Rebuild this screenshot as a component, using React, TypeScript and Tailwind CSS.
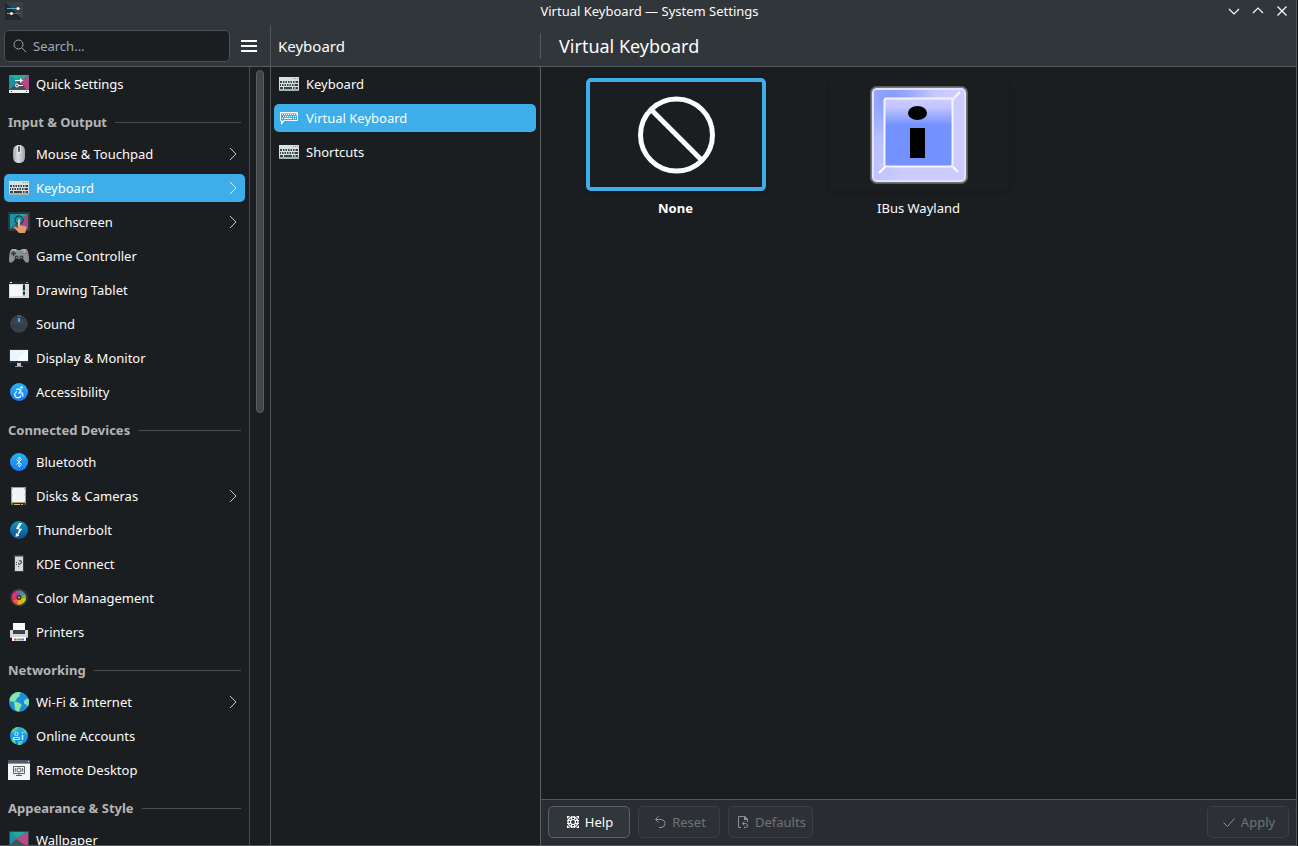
import clsx from 'clsx';
import * as React from 'react';

type Row = { label: string; icon: React.ReactNode; arrow?: boolean; active?: boolean };

function Icon({ children }: { children: React.ReactNode }) {
  return (
    <svg viewBox="0 0 22 22" className="h-[22px] w-[22px] shrink-0" fill="none" aria-hidden="true">
      {children}
    </svg>
  );
}

function QuickIcon() {
  return (
    <Icon>
      <path d="M1 2h20v16H1z" fill="#1a93a5" />
      <path d="M1 2h17l-7 7z" fill="#1fab9f" />
      <path d="M21 2v15h-4L9 9z" fill="#b3488c" />
      <path d="M21 2 9 10l3-8z" fill="#2aa98c" />
      <path d="M1 17 11 8l8 9z" fill="#455057" />
      <path d="M1 17h20v3H1z" fill="#eff0f1" />
      <path d="M3 18h1v1H3zM18 18h1v1h-1z" fill="#4d4d4d" />
      <path d="M7 7.500h8M7 12.500h8" stroke="#fff" />
      <path d="m12 5 3 2.500-3 2.500z" fill="#fff" />
      <circle cx="9" cy="12.500" r="1.500" fill="#6a5c72" stroke="#fff" />
    </Icon>
  );
}

function MouseIcon() {
  return (
    <Icon>
      <defs>
        <linearGradient id="mouse" x1="0" y1="0" x2="1" y2="0">
          <stop stopColor="#9fa4a9" />
          <stop offset="0.400" stopColor="#dadde0" />
          <stop offset="1" stopColor="#a0a5aa" />
        </linearGradient>
      </defs>
      <path d="M5 9c0-5 2-7 6-7s6 2 6 7v4c0 5-2 7-6 7s-6-2-6-7z" fill="url(#mouse)" />
      <path d="M9 2.500h4V9c0 2-4 2-4 0z" fill="#e6e8ea" />
      <rect x="10" y="3" width="2" height="6" rx="1" fill="#4b5866" />
    </Icon>
  );
}

function KeyboardIcon() {
  return (
    <Icon>
      <path d="M1 4h20v14H1z" fill="#dcdfe0" />
      <path d="M1 16h20v2H1z" fill="#a7b1b5" />
      <path d="M15 5.500h1M17 5.500h1M19 5.500h1" stroke="#2ecc71" />
      <path d="M2 9h2M5 9h1.500M7.500 9H9M10 9h1.500M12.500 9H14M15 9h1.500M17.500 9H20" stroke="#31464b" strokeWidth="2" />
      <path d="M2 12h1M4 12h1.500M6.500 12H8M9 12h1.500M11.500 12H13M14 12h1.500M16.500 12H20" stroke="#31464b" strokeWidth="2" />
      <path d="M2 15h3M6 15h8M15 15h1.500M17.500 15H20" stroke="#31464b" strokeWidth="2" />
    </Icon>
  );
}

function VirtualKeyboardIcon() {
  return (
    <Icon>
      <path d="M2.500 5.500h17v8H5.500l-2 3v-3h-1z" stroke="#fcfcfc" />
      <path d="M2 5h18v2H2z" fill="#fcfcfc" opacity=".4" />
      <path d="M4 7.500h15M5 9.500h13" stroke="#fcfcfc" strokeDasharray="1 1" />
      <path d="M4 11.500h1M6 11.500h8M15 11.500h1M17 11.500h1" stroke="#fcfcfc" />
      <path d="M3 14h3l-2.500 4z" fill="#fcfcfc" />
    </Icon>
  );
}

function TouchIcon() {
  return (
    <Icon>
      <rect y="1" width="22" height="19" rx="1" fill="#31363b" />
      <path d="M2 3h18v15H2z" fill="#1d92ab" />
      <path d="M10 3h8l-4 5z" fill="#23ad90" />
      <path d="M20 3v15h-5L13 8z" fill="#a54689" />
      <path d="m2 18 9-8 6 8z" fill="#4c5965" />
      <circle cx="11" cy="9" r="4" stroke="#17495c" strokeWidth="1.500" />
      <path d="M10 9c0-1.500 2-1.500 2 0v5l6 1.500c1 .500.500 3-1 6.500h-6l-5-5.500c-.500-1 1-1.500 2-.500l2 1z" fill="#e49b67" />
      <path d="M11 8.500v6" stroke="#fde2c8" />
    </Icon>
  );
}

function GamepadIcon() {
  return (
    <Icon>
      <path d="M4 4h4l1 1h4l1-1h4c2 1 3 5 3 11 0 4-3 3-4.500 1L15 14H7l-1.500 2C4 18 1 19 1 15 1 9 2 5 4 4z" fill="#8b9097" />
      <path d="M4 4h4l1 2H3zM14 4h4l1 2h-6z" fill="#a6aaae" />
      <path d="M5.500 6v5M3 8.500h5" stroke="#33383d" strokeWidth="1.500" />
      <circle cx="8.500" cy="12.500" r="2" fill="#33383d" />
      <circle cx="13.500" cy="12.500" r="2" fill="#33383d" />
      <circle cx="8.500" cy="12.500" r=".8" fill="#858a90" />
      <circle cx="13.500" cy="12.500" r=".8" fill="#858a90" />
      <circle cx="16.500" cy="6.500" r="1.100" fill="#e9b43a" />
      <circle cx="14.500" cy="8.500" r="1.100" fill="#4e91d0" />
      <circle cx="18.500" cy="8.500" r="1.100" fill="#d65356" />
      <circle cx="16.500" cy="10.500" r="1.100" fill="#54b36a" />
    </Icon>
  );
}

function TabletIcon() {
  return (
    <Icon>
      <path d="M1 2h20v3H1z" fill="#22272b" />
      <path d="M1 5h20v14H1z" fill="#d9dbdc" />
      <path d="M2 6h12v11H2z" fill="#f7f7f7" />
      <path d="M2 3.500h2" stroke="#eee" />
      <path d="M18 3.500h2" stroke="#3daee9" />
      <path d="M16 5.500v10" stroke="#232629" strokeWidth="2" />
      <path d="M16 11v2" stroke="#3daee9" strokeWidth="2" />
      <path d="m15 15 1 2 1-2z" fill="#555" />
    </Icon>
  );
}

function SoundIcon() {
  return (
    <Icon>
      <circle cx="11" cy="11" r="9" fill="#2f373f" />
      <circle cx="11" cy="10.500" r="7.500" stroke="#4c5660" strokeDasharray="2 1" />
      <circle cx="11" cy="11" r="6.500" fill="#3b4650" />
      <path d="M4.500 11a6.500 6.500 0 0 0 13 0" fill="#343e47" />
      <path d="M11 5v4" stroke="#3daee9" strokeWidth="2" />
      <path d="M9 3h4" stroke="#2382bd" />
    </Icon>
  );
}

function MonitorIcon() {
  return (
    <Icon>
      <path d="M1 2h20v14H1z" fill="#2d3236" />
      <path d="M2 3h18v11H2z" fill="#e9f6fd" />
      <path d="M20 3v11H7z" fill="#f7fcff" />
      <path d="M9 16h4v3H9z" fill="#bfc3c6" />
      <path d="M7 19.500h8" stroke="#8b9195" />
    </Icon>
  );
}

function BlueDisc({ id, from, to, children }: { id: string; from: string; to: string; children: React.ReactNode }) {
  return (
    <Icon>
      <defs>
        <linearGradient id={id} x1="0" y1="0" x2="0" y2="1">
          <stop stopColor={from} />
          <stop offset="1" stopColor={to} />
        </linearGradient>
      </defs>
      <circle cx="11" cy="11" r="9" fill={`url(#${id})`} />
      {children}
    </Icon>
  );
}

function AccessIcon() {
  return (
    <BlueDisc id="access" from="#23b5f8" to="#1b78ee">
      <circle cx="13.500" cy="6.500" r="1.200" fill="#fff" />
      <path d="M8 8.500 11 8l2 1.500-2 2.500h3.500l.500 3.500" stroke="#fff" strokeWidth="1.200" />
      <path d="M9 10.500a3.200 3.200 0 1 0 4 4" stroke="#fff" strokeWidth="1.200" />
    </BlueDisc>
  );
}

function BluetoothIcon() {
  return (
    <BlueDisc id="bt" from="#23b5f8" to="#1b78ee">
      <path d="m8.500 8.500 5 5L11 16V6l2.500 2.500-5 5" stroke="#d8f1ff" />
    </BlueDisc>
  );
}

function DiskIcon() {
  return (
    <Icon>
      <path d="M3 2h15v16H3z" fill="#9a9fa2" />
      <path d="M5 3h11l1 2v4l-.500 1 .500 1v5l-1 1H5l-1-1v-5l.500-1L4 9V5z" fill="#f3f4f4" />
      <path d="M3 18h15v2H3z" fill="#656c70" />
      <path d="M5 18h12v2H5z" fill="#2a2e32" />
      <path d="M6 19.500h6M13 19.500h2" stroke="#f2b64a" />
    </Icon>
  );
}

function ThunderIcon() {
  return (
    <BlueDisc id="thunder" from="#1596c4" to="#0d4d92">
      <path d="m11 4-3 6 3 .500-1.500 4.500L8 14l-.500 4 4-1.500-1.200-.700L14 10l-3-.800L14 4z" fill="#fff" />
    </BlueDisc>
  );
}

function KdeConnectIcon() {
  return (
    <Icon>
      <path d="M6 2h10v17H6z" fill="#373c40" />
      <path d="M7 3.500h8V18H7z" fill="#d5d8da" />
      <path d="M11 8c1.500-1 3 .500 2 2-.500 1-1.500.500-2 2" stroke="#4b5054" strokeWidth="1.300" />
      <path d="M8 9h1v1H8zM8 11h1v1H8zM10 13h1v1h-1zM10 10h1v1h-1z" fill="#4b5054" />
    </Icon>
  );
}

function ColorIcon() {
  return (
    <Icon>
      <circle cx="11" cy="10.500" r="9" fill="#363b40" />
      <path d="M11 10.500 7 4.500a7 7 0 0 1 5-1z" fill="#8e5bb5" />
      <path d="m11 10.500 1-7a7 7 0 0 1 5 3.500z" fill="#4f8f9e" />
      <path d="m11 10.500 6-3.500a7 7 0 0 1 1 4z" fill="#76bb46" />
      <path d="m11 10.500 7 .500a7 7 0 0 1-3 5.500z" fill="#c6cf18" />
      <path d="m11 10.500 4 6a7 7 0 0 1-6 1z" fill="#f4a81d" />
      <path d="m11 10.500-2 7a7 7 0 0 1-4.500-4z" fill="#f4652c" />
      <path d="M11 10.500 4.500 13.500A7 7 0 0 1 7 4.500z" fill="#e52e75" />
      <circle cx="11" cy="10.500" r="2.500" fill="#31363b" />
      <circle cx="11" cy="10.500" r="1.100" fill="#aaa" />
    </Icon>
  );
}

function PrinterIcon() {
  return (
    <Icon>
      <path d="M2 9h18v7H2z" fill="#d5d8da" />
      <path d="M5 2h12v9H5z" fill="#fafafa" />
      <path d="M5 9h12v4H5z" fill="#3a424a" />
      <path d="M2 16h18v1H2z" fill="#8c959b" />
      <path d="M4 16h14v4H4z" fill="#fff" />
      <path d="M6 18.500h2" stroke="#e74c3c" strokeWidth="2" />
      <path d="M8 18.500h2" stroke="#f39c1f" strokeWidth="2" />
      <path d="M10 18.500h2" stroke="#2ecc71" strokeWidth="2" />
      <path d="M12 18.500h2" stroke="#3daee9" strokeWidth="2" />
      <path d="M14 18.500h2" stroke="#9b59b6" strokeWidth="2" />
    </Icon>
  );
}

function GlobeIcon() {
  return (
    <Icon>
      <circle cx="11" cy="11" r="10" fill="#1e8cdf" />
      <path d="M1.500 8C3 4 6 1 11 1l2 .500-2 2.500 1 1-3 2-1 3-3 1-1-1-2 1z" fill="#83e5b2" />
      <path d="M6 11h3l4 2c1 1 0 3-1 4l-1 3.500c-2 0-4-1-4-3z" fill="#8aea98" />
      <path d="m16 10 2-2 2.500-.500c1 3 .500 6-.500 8l-2-2-2-1z" fill="#7de6b4" />
    </Icon>
  );
}

function AccountsIcon() {
  return (
    <BlueDisc id="accounts" from="#22b2f0" to="#1c7fe0">
      <path d="M3 7c1-3 4-5 8-5L8 6 4 8zM14 3l4 3 1.500 3-3-1zM3 13l4 2 1 4c-3-1-5-3-5-6zM10 16h5l-2 4h-3z" fill="#55d492" />
      <circle cx="8.500" cy="9" r="1.700" stroke="#c7efff" />
      <path d="M5.500 14.500v-2h6v2z" stroke="#c7efff" />
      <path d="M14.500 7v1.500M14.500 10v5" stroke="#c7efff" strokeWidth="1.500" />
    </BlueDisc>
  );
}

function RemoteIcon() {
  return (
    <Icon>
      <path d="M0 1h22v3H0z" fill="#4b5a66" />
      <path d="M0 4h22v17H0z" fill="#f4f5f5" />
      <path d="M0 4.500h22" stroke="#3daee9" />
      <path d="M20 2h1v1h-1z" fill="#fff" />
      <path d="M5.500 7.500h11v7h-11zM8 16.500h6M11 14v3" stroke="#5b6165" />
      <circle cx="11" cy="11" r="2" stroke="#5b6165" />
      <path d="m8 9-1 2 1 2M14 9l1 2-1 2" stroke="#5b6165" />
    </Icon>
  );
}

function WallpaperIcon() {
  return (
    <Icon>
      <path d="M1 2h20v18H1z" fill="#3a444c" />
      <path d="M2 3h18v14H2z" fill="#1a93a5" />
      <path d="M4 3h14l-9 6z" fill="#22aa9a" />
      <path d="M20 3v13h-4L8 9z" fill="#bb4a84" />
      <path d="m2 16 6-6 9 6v3H2z" fill="#455057" />
    </Icon>
  );
}

const sections: { title?: string; rows: Row[] }[] = [
  { rows: [{ label: 'Quick Settings', icon: <QuickIcon /> }] },
  {
    title: 'Input & Output',
    rows: [
      { label: 'Mouse & Touchpad', icon: <MouseIcon />, arrow: true },
      { label: 'Keyboard', icon: <KeyboardIcon />, arrow: true, active: true },
      { label: 'Touchscreen', icon: <TouchIcon />, arrow: true },
      { label: 'Game Controller', icon: <GamepadIcon /> },
      { label: 'Drawing Tablet', icon: <TabletIcon /> },
      { label: 'Sound', icon: <SoundIcon /> },
      { label: 'Display & Monitor', icon: <MonitorIcon /> },
      { label: 'Accessibility', icon: <AccessIcon /> },
    ],
  },
  {
    title: 'Connected Devices',
    rows: [
      { label: 'Bluetooth', icon: <BluetoothIcon /> },
      { label: 'Disks & Cameras', icon: <DiskIcon />, arrow: true },
      { label: 'Thunderbolt', icon: <ThunderIcon /> },
      { label: 'KDE Connect', icon: <KdeConnectIcon /> },
      { label: 'Color Management', icon: <ColorIcon /> },
      { label: 'Printers', icon: <PrinterIcon /> },
    ],
  },
  {
    title: 'Networking',
    rows: [
      { label: 'Wi-Fi & Internet', icon: <GlobeIcon />, arrow: true },
      { label: 'Online Accounts', icon: <AccountsIcon /> },
      { label: 'Remote Desktop', icon: <RemoteIcon /> },
    ],
  },
  { title: 'Appearance & Style', rows: [{ label: 'Wallpaper', icon: <WallpaperIcon /> }] },
];

const pages: Row[] = [
  { label: 'Keyboard', icon: <KeyboardIcon /> },
  { label: 'Virtual Keyboard', icon: <VirtualKeyboardIcon />, active: true },
  { label: 'Shortcuts', icon: <KeyboardIcon /> },
];

function NavRow({ label, icon, arrow, active }: Row) {
  return (
    <li className="py-[3px]">
      <a
        href="#"
        aria-current={active ? 'page' : undefined}
        className={clsx('flex h-7 items-center gap-[6px] rounded-[5px] px-1', active && 'bg-[#3daee9]')}
      >
        {icon}
        <span className="flex-1 whitespace-nowrap">{label}</span>
        {arrow && (
          <svg viewBox="0 0 16 16" className="h-4 w-4" fill="none" stroke={active ? '#d5eefb' : '#c5c8ca'} aria-hidden="true">
            <path d="m5 2 6 6-6 6" />
          </svg>
        )}
      </a>
    </li>
  );
}

function TitleBar() {
  return (
    <header className="grid h-[25px] shrink-0 grid-cols-3 items-center pr-[2px] pb-[3px] pl-[5px]">
      <svg viewBox="0 0 18 18" className="h-[18px] w-[18px]" aria-hidden="true">
        <rect width="18" height="18" fill="#24282b" />
        <path d="M0 0h18v18z" fill="#3a3f43" />
        <path d="M2 6.500h14M2 11.500h14" stroke="#5b6064" />
        <path d="M2 6.500h11M2 11.500h4" stroke="#3daee9" />
        <circle cx="13" cy="6.500" r="1.500" fill="#fff" />
        <circle cx="6.500" cy="11.500" r="1.500" fill="#fff" />
      </svg>
      <span className="text-center whitespace-nowrap">Virtual Keyboard — System Settings</span>
      <div className="flex justify-end">
        <button type="button" aria-label="Minimize" className="flex h-5 w-6 items-center justify-center">
          <svg viewBox="0 0 16 16" className="h-4 w-4" fill="none" stroke="#fcfcfc" strokeWidth="1.200">
            <path d="m3 6 5 5 5-5" />
          </svg>
        </button>
        <button type="button" aria-label="Maximize" className="flex h-5 w-6 items-center justify-center">
          <svg viewBox="0 0 16 16" className="h-4 w-4" fill="none" stroke="#fcfcfc" strokeWidth="1.200">
            <path d="m3 10 5-5 5 5" />
          </svg>
        </button>
        <button type="button" aria-label="Close" className="flex h-5 w-6 items-center justify-center">
          <svg viewBox="0 0 16 16" className="h-4 w-4" fill="none" stroke="#fcfcfc" strokeWidth="1.300">
            <path d="m3.500 3.500 9 9M12.500 3.500l-9 9" />
          </svg>
        </button>
      </div>
    </header>
  );
}

function Sidebar() {
  return (
    <div className="flex w-[271px] shrink-0 flex-col border-r border-[#53575b]">
      <div className="flex h-[42px] shrink-0 items-center border-b border-[#565b62] bg-[#31363b] pr-[2px] pl-1">
        <label className="flex h-8 flex-1 items-center gap-[6px] rounded-[5px] border border-[#4b5054] bg-[#1b1e20] pl-2">
          <svg viewBox="0 0 14 14" className="h-[14px] w-[14px] shrink-0" fill="none" stroke="#a1a5a8" aria-hidden="true">
            <circle cx="5.500" cy="5.500" r="4.500" />
            <path d="m9 9 4 4" />
          </svg>
          <input
            type="text"
            placeholder="Search..."
            aria-label="Search"
            className="w-full min-w-0 bg-transparent outline-none placeholder:text-[#a1a9b1]"
          />
        </label>
        <button type="button" aria-label="Show menu" className="flex h-8 w-[38px] items-center justify-center">
          <svg viewBox="0 0 16 12" className="h-3 w-4" fill="#fcfcfc">
            <path d="M0 0h16v2H0zM0 5h16v2H0zM0 10h16v2H0z" />
          </svg>
        </button>
      </div>
      <div className="flex min-h-0 flex-1">
        <nav className="min-w-0 flex-1 overflow-hidden border-r border-[#494d50] px-1">
          {sections.map((section) => (
            <section key={section.rows[0].label}>
              {section.title && (
                <h2 className="flex h-9 items-center gap-2 px-1 pt-[6px] font-bold whitespace-nowrap text-[#b3b4b5]">
                  {section.title}
                  <span className="h-px flex-1 bg-[#494d50]" />
                </h2>
              )}
              <ul>
                {section.rows.map((row) => (
                  <NavRow key={row.label} {...row} />
                ))}
              </ul>
            </section>
          ))}
        </nav>
        <div className="w-5 px-[6px] py-[3px]">
          <div className="h-4/9 w-2 rounded-full border border-[#5b5e60] bg-[#414547]" />
        </div>
      </div>
    </div>
  );
}

function PageList() {
  return (
    <div className="flex w-[270px] shrink-0 flex-col">
      <div className="flex h-[42px] shrink-0 items-center border-b border-[#565b62] bg-[#31363b] pl-[7px]">
        <h2 className="h-[26px] flex-1 border-r border-[#565b62] text-[15px] leading-[26px]">Keyboard</h2>
      </div>
      <ul className="flex-1 border-r border-[#5b5f63] pr-1 pl-[3px]">
        {pages.map((page) => (
          <NavRow key={page.label} {...page} />
        ))}
      </ul>
    </div>
  );
}

function NoneIcon() {
  return (
    <svg viewBox="0 0 78 78" className="h-[78px] w-[78px]" fill="none" stroke="#fcfcfc" strokeWidth="5" aria-hidden="true">
      <circle cx="39.500" cy="39" r="36" />
      <path d="m14.500 14 50 50" />
    </svg>
  );
}

function IBusIcon() {
  return (
    <svg viewBox="0 0 98 98" className="h-[98px] w-[98px]" fill="none" aria-hidden="true">
      <defs>
        <linearGradient id="bezel" x1="0" y1="0.200" x2="0.600" y2="0.500">
          <stop stopColor="#7391ff" />
          <stop offset="1" stopColor="#ccccff" />
        </linearGradient>
        <linearGradient id="face" x1="0" y1="0" x2="0" y2="1">
          <stop stopColor="#ccccff" />
          <stop offset="0.120" stopColor="#c3c6ff" />
          <stop offset="0.400" stopColor="#7391ff" />
        </linearGradient>
        <radialGradient id="glow" cx="0.220" cy="0.100" r="0.480">
          <stop stopColor="#7f9aff" />
          <stop offset="1" stopColor="#ccccff" />
        </radialGradient>
      </defs>
      <rect x=".5" y=".5" width="97" height="97" rx="6" fill="#77777c" stroke="#5a5a5a" />
      <rect x="2" y="2" width="94" height="94" rx="5" fill="#e4e3ff" />
      <rect x="4" y="4" width="90" height="90" rx="3" fill="url(#bezel)" />
      <rect x="4" y="4" width="90" height="90" rx="3" fill="url(#glow)" opacity=".7" />
      <path d="m82 14 8-8" stroke="#f0f0f4" strokeWidth="2.500" />
      <path d="m15 81-6 6M83 81l5 5" stroke="#fff" strokeWidth="2" />
      <rect x="14.500" y="12.500" width="68" height="68" rx="2" fill="url(#face)" stroke="#f4f3ff" strokeWidth="2" />
      <ellipse cx="47.500" cy="27" rx="9.500" ry="7" fill="#000" />
      <path d="M40 42h15v30H40z" fill="#000" />
    </svg>
  );
}

function Choice({ label, selected, children }: { label: string; selected?: boolean; children: React.ReactNode }) {
  return (
    <button type="button" aria-pressed={!!selected} className="flex flex-col items-center gap-[7px]">
      <span
        className={clsx(
          'flex h-[113px] w-[180px] items-center justify-center rounded-[5px] border-4 shadow-[0_1px_4px_rgba(0,0,0,0.25)]',
          selected ? 'border-[#3daee9]' : 'border-transparent',
        )}
      >
        {children}
      </span>
      <span className={clsx(selected && 'font-bold')}>{label}</span>
    </button>
  );
}

function FooterButton({ label, disabled, children }: { label: string; disabled?: boolean; children: React.ReactNode }) {
  return (
    <button
      type="button"
      disabled={disabled}
      className={clsx(
        'flex h-8 min-w-[82px] items-center justify-center gap-1 rounded-[5px] border px-[6px]',
        disabled ? 'border-[#3c4044] bg-[#2d3135] text-[#6f7376]' : 'border-[#5c6165] bg-[#31363b]',
      )}
    >
      <svg viewBox="0 0 16 16" className="h-4 w-4" fill="none" stroke={disabled ? '#8e9194' : '#fcfcfc'} aria-hidden="true">
        {children}
      </svg>
      {label}
    </button>
  );
}

function Main() {
  return (
    <main className="flex min-w-0 flex-1 flex-col">
      <div className="flex h-[42px] shrink-0 items-center border-b border-[#565b62] bg-[#31363b] pl-[18px]">
        <h1 className="text-lg">Virtual Keyboard</h1>
      </div>
      <div className="grid flex-1 grid-cols-3 content-start px-[13px] pt-[11px]">
        <Choice label="None" selected>
          <NoneIcon />
        </Choice>
        <Choice label="IBus Wayland">
          <IBusIcon />
        </Choice>
      </div>
      <footer className="flex shrink-0 gap-2 border-t border-[#53575b] bg-[#292c30] px-[7px] pt-[6px] pb-[7px]">
        <FooterButton label="Help">
          <circle cx="8" cy="8" r="5" strokeWidth="1.300" />
          <circle cx="8" cy="8" r="2.500" strokeWidth="1.200" />
          <path d="M6.500 2v4M9.500 2v4M6.500 10v4M9.500 10v4M2 6.500h4M2 9.500h4M10 6.500h4M10 9.500h4" />
          <path d="M2 2h3L2 5zM14 2v3l-3-3zM14 14h-3l3-3zM2 14v-3l3 3z" fill="#fcfcfc" stroke="none" />
        </FooterButton>
        <FooterButton label="Reset" disabled>
          <path d="M6.500 2.500 3.500 5.500l3 3M3.500 5.500H9a4 4 0 0 1 0 8H7" />
        </FooterButton>
        <FooterButton label="Defaults" disabled>
          <path d="M6 13.500H3.500v-11h6l3 3V8M9.500 2.500v3h3" />
          <path d="m9.500 7.500-2 2 2 2M7.500 9.500h3a2 2 0 0 1 0 4H9" />
          <path d="M9 2h1l3 3v1H9z" fill="#8e9194" stroke="none" />
        </FooterButton>
        <div className="flex flex-1 justify-end">
          <FooterButton label="Apply" disabled>
            <path d="m2.500 8.500 4 4 7-8" />
          </FooterButton>
        </div>
      </footer>
    </main>
  );
}

export default function App() {
  return (
    <div className="h-screen bg-[#0f1112] pr-px">
      <div className="flex h-full flex-col border-r border-b border-[#53575b] bg-[#31363b] font-['Noto_Sans',sans-serif] text-[13px] leading-5 text-[#fcfcfc]">
        <TitleBar />
        <div className="flex min-h-0 flex-1 bg-[#1b1e20]">
          <Sidebar />
          <PageList />
          <Main />
        </div>
      </div>
    </div>
  );
}
